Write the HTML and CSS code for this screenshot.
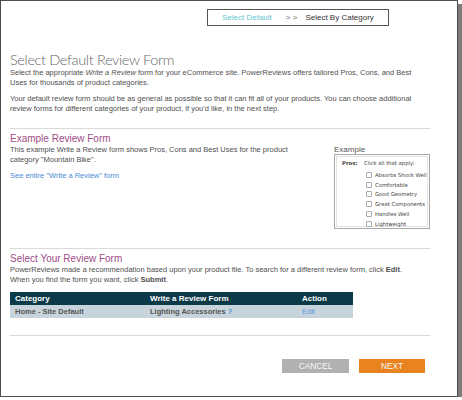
FILE: index.html
```html
<!DOCTYPE html>
<html>
<head>
<meta charset="utf-8">
<link rel="stylesheet" href="styles.css">
</head>
<body>
<div class="window">
  <div class="steps">
    <span class="step-active">Select Default</span>
    <span class="step-sep">&gt; &gt;</span>
    <span class="step">Select By Category</span>
  </div>

  <div class="content">
    <h1 class="title">Select Default Review Form</h1>
    <p class="text">Select the appropriate <i>Write a Review</i> form for your eCommerce site. PowerReviews offers tailored Pros, Cons, and Best<br>Uses for thousands of product categories.</p>
    <p class="text gap">Your default review form should be as general as possible so that it can fit all of your products. You can choose additional<br>review forms for different categories of your product, if you'd like, in the next step.</p>

    <hr class="sep sep-1">

    <div class="example-section">
      <div class="example-info">
        <h2 class="subtitle">Example Review Form</h2>
        <p class="text">This example Write a Review form shows Pros, Cons and Best Uses for the product<br>category "Mountain Bike".</p>
        <a class="link" href="#">See entire "Write a Review" form</a>
      </div>
      <div class="example-preview">
        <div class="preview-label">Example</div>
        <div class="preview-box">
          <div class="preview-inner">
            <div class="pros-label">Pros:</div>
            <div class="pros-list">
              <div class="pros-head">Click all that apply:</div>
              <div class="pros-item"><span class="cb"></span>Absorbs Shock Well</div>
              <div class="pros-item"><span class="cb"></span>Comfortable</div>
              <div class="pros-item"><span class="cb"></span>Good Geometry</div>
              <div class="pros-item"><span class="cb"></span>Great Components</div>
              <div class="pros-item"><span class="cb"></span>Handles Well</div>
              <div class="pros-item"><span class="cb"></span>Lightweight</div>
            </div>
          </div>
        </div>
      </div>
    </div>

    <hr class="sep sep-2">

    <h2 class="subtitle">Select Your Review Form</h2>
    <p class="text">PowerReviews made a recommendation based upon your product file. To search for a different review form, click <b>Edit</b>.<br>When you find the form you want, click <b>Submit</b>.</p>

    <table class="forms">
      <thead>
        <tr><th class="c1">Category</th><th class="c2">Write a Review Form</th><th class="c3">Action</th></tr>
      </thead>
      <tbody>
        <tr><td>Home - Site Default</td><td>Lighting Accessories <span class="q">?</span></td><td><a class="edit" href="#">Edit</a></td></tr>
      </tbody>
    </table>

    <hr class="sep sep-3">

    <div class="actions">
      <button class="btn btn-cancel">CANCEL</button>
      <button class="btn btn-next">NEXT</button>
    </div>
  </div>
</div>
</body>
</html>
```

FILE: styles.css
```css
html, body {
  margin: 0;
  padding: 0;
  background: #ffffff;
}

body {
  font-family: "Liberation Sans", Arial, sans-serif;
  color: #505050;
}

.window {
  box-sizing: border-box;
  width: 458px;
  height: 397px;
  border: 1px solid #4d4d4d;
  box-shadow: 4px 4px 0 #7d7d7d;
  padding: 0 0 0 9px;
  overflow: hidden;
}

.steps {
  display: inline-flex;
  align-items: center;
  box-sizing: border-box;
  height: 17px;
  margin: 8px 0 0 197px;
  padding: 0 14px 0 14px;
  border: 1px solid #555;
  font-size: 8px;
}

.step-active {
  color: #62c3d3;
}

.step-sep {
  color: #666;
  margin: 0 8px 0 14px;
}

.step {
  color: #333;
}

.content {
  width: 424px;
}

.title {
  margin: 25px 0 0 0;
  font-family: Lato, "Open Sans", sans-serif;
  font-weight: 300;
  font-size: 14.5px;
  letter-spacing: -0.35px;
  line-height: 17px;
  color: #666;
}

.text {
  margin: 0;
  font-size: 7.5px;
  line-height: 10px;
  color: #505050;
  white-space: nowrap;
}

.text.gap {
  margin-top: 6px;
}

.sep {
  width: 420px;
  margin: 0;
  border: 0;
  height: 1px;
  background: #dadada;
}

.sep-1 { margin-top: 14px; }
.sep-2 { margin-top: 19px; }
.sep-3 { margin-top: 17px; }

.example-section {
  display: flex;
  width: 420px;
}

.example-info {
  flex: 1 1 auto;
  min-width: 0;
}

.subtitle {
  margin: 4px 0 0 0;
  font-weight: normal;
  font-size: 10px;
  line-height: 12px;
  color: #9e4c86;
}

.link {
  display: block;
  margin-top: 6px;
  font-size: 7.5px;
  line-height: 10px;
  color: #4a8ad4;
  text-decoration: none;
}

.example-preview {
  flex: 0 0 96px;
  margin-top: 17px;
}

.preview-label {
  font-size: 8px;
  line-height: 8px;
  color: #555;
}

.preview-box {
  box-sizing: border-box;
  height: 75px;
  border: 1px solid #a8a8a8;
  padding: 1px;
}

.preview-inner {
  box-sizing: border-box;
  height: 100%;
  border: 1px solid #e2e2e2;
  display: flex;
  font-family: "DejaVu Sans", Verdana, sans-serif;
  font-size: 5.3px;
  color: #444;
  padding: 2px 0 0 5px;
  white-space: nowrap;
}

.pros-label {
  font-weight: bold;
  width: 22px;
  line-height: 8px;
}

.pros-head {
  line-height: 8px;
  margin-bottom: 3px;
}

.pros-item {
  display: flex;
  align-items: center;
  height: 9.8px;
  padding-left: 2px;
}

.cb {
  box-sizing: border-box;
  width: 6px;
  height: 6px;
  border: 1px solid #aaa;
  border-radius: 1px;
  margin-right: 3px;
  background: #fff;
}

.forms {
  margin-top: 7px;
  width: 343px;
  border-collapse: collapse;
  font-size: 7.5px;
}

.forms th {
  background: #0c3a48;
  color: #fff;
  font-size: 8px;
  font-weight: bold;
  text-align: left;
  height: 12.6px;
  padding: 0 0 0 5px;
}

.forms th.c1 { width: 130px; }
.forms th.c2 { width: 147px; }

.forms td {
  background: #c7d4dc;
  color: #555;
  font-weight: bold;
  height: 13.4px;
  padding: 0 0 0 5px;
}

.q {
  color: #4a90d9;
}

.edit {
  color: #5b9ae0;
  font-weight: normal;
  text-decoration: none;
}

.actions {
  display: flex;
  justify-content: flex-end;
  gap: 10px;
  width: 415px;
  margin-top: 23px;
}

.btn {
  border: 0;
  height: 14px;
  padding: 0;
  font-family: "Liberation Sans", Arial, sans-serif;
  font-size: 8.3px;
  color: #f7f7f7;
}

.btn-cancel {
  width: 67px;
  background: #b1b1b1;
}

.btn-next {
  width: 66px;
  background: #e8831f;
}
```
